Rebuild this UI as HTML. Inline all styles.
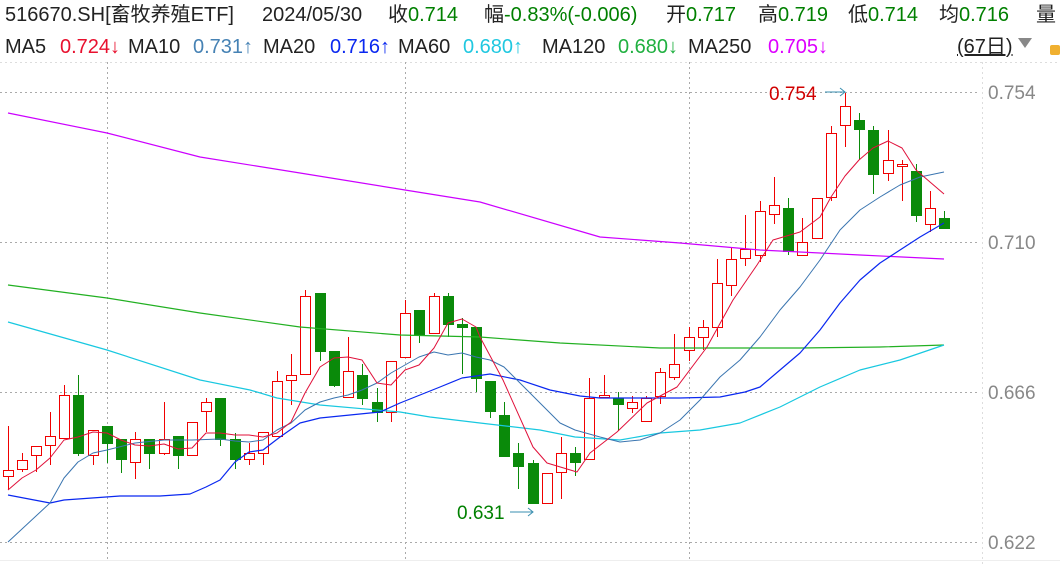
<!DOCTYPE html>
<html><head><meta charset="utf-8"><style>
body{margin:0;width:1060px;height:566px;background:#fff;overflow:hidden;position:relative;font-family:"Liberation Sans","Noto Sans CJK SC",sans-serif;}
.t{position:absolute;font-size:20px;white-space:nowrap;color:#222;line-height:22px}
.g{color:#008000}
svg{position:absolute;left:0;top:0}
</style></head><body>
<svg width="1060" height="566" id="s">
<g stroke="#aaa" stroke-dasharray="2,3" stroke-width="1">
<line x1="0" y1="62.5" x2="1060" y2="62.5" stroke="#ddd"/>
<line x1="0" y1="92.5" x2="980" y2="92.5"/>
<line x1="0" y1="242.5" x2="980" y2="242.5"/>
<line x1="0" y1="392.5" x2="980" y2="392.5"/>
<line x1="0" y1="542.5" x2="980" y2="542.5"/>
<line x1="107.5" y1="62" x2="107.5" y2="560"/>
<line x1="405.5" y1="62" x2="405.5" y2="560"/>
<line x1="689.5" y1="62" x2="689.5" y2="560"/>
<line x1="982.5" y1="62" x2="982.5" y2="566" stroke="#ddd"/>
</g>
<line x1="0" y1="560.5" x2="1060" y2="560.5" stroke="#eee"/>
<g id="c"></g>
<g fill="none" stroke-width="1.2" stroke-linejoin="round">
<polyline stroke="#cc00ff" points="8,113 107,133 200,157 300,173 405,190 480,202 600,237 680,243 760,250 860,255 944,259"/>
<polyline stroke="#22b022" points="8,285 107,298 200,313 300,327 400,335 480,337 560,343 660,348 740,348 800,348 880,347 944,345"/>
<polyline stroke="#18c8e0" points="8,322 107,350 200,380 250,390 277,398 320,405 400,412 430,417 480,423 540,430 575,437 620,440 660,433 700,430 740,423 780,407 820,387 860,370 900,360 944,345"/>
<polyline stroke="#0a28f0" points="8,495 50,503 64,500 92,498 120,496 160,496 190,494 206,487 220,480 235,462 249,452 263,450 280,437 300,423 320,418 350,415 380,412 400,403 420,395 440,387 462,378 490,374 520,380 550,390 580,396 600,398 640,398 680,398 720,397 745,392 760,387 780,370 800,353 820,330 840,303 860,280 880,263 900,250 920,237 944,223"/>
<polyline stroke="#3a75b0" stroke-width="1" points="8,542 50,503 64,478 78,462 93,453 107,450 135,443 164,440 192,440 220,439 235,441 249,442 263,440 277,430 291,423 305,410 320,402 334,398 348,395 362,390 377,383 391,373 405,365 419,357 434,352 448,355 462,353 476,357 490,360 504,367 520,383 540,403 560,423 575,430 600,437 620,442 640,440 660,433 680,420 700,400 720,377 740,360 760,337 780,310 800,287 820,260 840,230 860,210 880,197 900,185 920,177 944,172"/>
<polyline stroke="#e0103a" stroke-width="1" points="8,490 22,478 36,470 50,458 64,440 78,437 93,432 107,433 121,440 135,445 149,446 164,444 178,449 192,448 206,433 220,433 235,435 249,435 263,437 277,433 291,422 305,393 320,367 334,358 348,357 362,360 377,383 391,385 405,370 419,365 434,348 448,323 462,319 476,327 480,337 503,380 533,447 547,463 577,472 590,453 617,432 647,403 677,387 707,347 733,300 757,265 773,240 800,232 820,217 831,197 845,176 859,160 873,148 888,141 902,148 916,170 930,182 944,194"/>
</g>
<g stroke="#3a8fb0" fill="none" stroke-width="1">
<polyline points="825,92 845,92"/><polyline points="840,88 845,92 840,96"/>
<polyline points="510,512 533,512"/><polyline points="528,508 533,512 528,516"/>
</g>
<text x="769" y="100" font-size="19" fill="#d00000" font-family="Liberation Sans">0.754</text>
<text x="457" y="519" font-size="19" fill="#008000" font-family="Liberation Sans">0.631</text>
<g font-size="19" fill="#888" font-family="Liberation Sans">
<text x="988" y="99">0.754</text><text x="988" y="249">0.710</text><text x="988" y="399">0.666</text><text x="988" y="549">0.622</text>
</g>
<polygon points="1018,38 1032,38 1025,48" fill="#888"/>
<rect x="1050" y="45" width="10" height="10" rx="2" fill="#f0b030"/>
</svg>
<div class="t" style="left:5px;top:4px">516670.SH[畜牧养殖ETF]</div>
<div class="t" style="left:262px;top:4px">2024/05/30</div>
<div class="t" style="left:388px;top:4px">收<span class="g">0.714</span></div>
<div class="t" style="left:484px;top:4px">幅<span class="g">-0.83%(-0.006)</span></div>
<div class="t" style="left:666px;top:4px">开<span class="g">0.717</span></div>
<div class="t" style="left:758px;top:4px">高<span class="g">0.719</span></div>
<div class="t" style="left:848px;top:4px">低<span class="g">0.714</span></div>
<div class="t" style="left:939px;top:4px">均<span class="g">0.716</span></div>
<div class="t" style="left:1036px;top:4px">量</div>
<div class="t" style="left:5px;top:36px">MA5</div>
<div class="t" style="left:60px;top:36px;color:#e8102e">0.724↓</div>
<div class="t" style="left:128px;top:36px">MA10</div>
<div class="t" style="left:193px;top:36px;color:#4682b4">0.731↑</div>
<div class="t" style="left:263px;top:36px">MA20</div>
<div class="t" style="left:330px;top:36px;color:#0a28f0">0.716↑</div>
<div class="t" style="left:398px;top:36px">MA60</div>
<div class="t" style="left:463px;top:36px;color:#20c8e0">0.680↑</div>
<div class="t" style="left:542px;top:36px">MA120</div>
<div class="t" style="left:618px;top:36px;color:#20b040">0.680↓</div>
<div class="t" style="left:688px;top:36px">MA250</div>
<div class="t" style="left:768px;top:36px;color:#dd00ff">0.705↓</div>
<div class="t" style="left:957px;top:36px;text-decoration:underline">(67日)</div>
<script>
var d=[[8,470,476,426,490,1],[22,460,469,453,472,1],[36,446,455,446,472,1],[50,436,445,412,465,1],[64,395,438,385,438,1],[78,395,453,375,456,0],[93,430,455,430,465,1],[107,426,443,426,463,0],[121,439,459,439,473,0],[135,439,462,432,479,1],[149,439,453,439,469,0],[164,439,453,402,455,1],[178,436,455,436,469,0],[192,422,455,422,455,1],[206,402,411,398,432,1],[220,398,439,398,446,0],[235,439,459,433,469,0],[249,453,459,443,465,1],[263,432,453,432,465,1],[277,381,436,371,436,1],[291,375,380,354,405,1],[305,296,374,290,374,1],[320,293,351,293,361,0],[334,351,385,351,387,0],[348,371,397,337,397,1],[362,375,398,364,405,0],[377,402,412,388,422,0],[391,361,412,361,422,1],[405,313,357,300,357,1],[419,310,334,310,343,0],[434,296,333,293,333,1],[448,296,324,293,337,0],[462,324,327,318,374,0],[476,327,378,327,392,0],[490,381,411,381,418,0],[504,415,456,402,456,0],[518,453,466,443,489,0],[533,463,503,460,503,0],[547,473,503,473,503,1],[561,453,472,437,499,1],[575,453,462,447,476,0],[589,398,459,378,459,1],[604,395,397,375,397,1],[618,398,404,392,431,0],[632,402,408,396,413,1],[646,398,421,396,421,1],[660,372,396,368,404,1],[674,364,377,334,380,1],[689,337,350,327,361,1],[703,327,337,320,350,1],[717,283,327,259,337,1],[731,259,285,247,296,1],[745,249,258,215,266,1],[760,211,255,201,262,1],[774,205,214,177,224,1],[788,208,251,198,255,0],[802,242,255,218,255,1],[817,198,238,198,238,1],[831,133,197,126,201,1],[845,106,125,93,147,1],[859,120,129,113,160,0],[873,130,174,126,194,0],[888,160,173,130,181,1],[902,164,166,160,201,1],[916,171,215,164,222,0],[930,208,224,191,232,1],[944,218,228,211,228,0]];
var h='';d.forEach(function(c){var x=c[0]+.5,col=c[5]?'#f00000':'#0a8a0a';
h+='<line x1="'+x+'" y1="'+c[3]+'" x2="'+x+'" y2="'+c[1]+'" stroke="'+col+'"/><line x1="'+x+'" y1="'+c[2]+'" x2="'+x+'" y2="'+c[4]+'" stroke="'+col+'"/>';
var bh=Math.max(1,c[2]-c[1]);
if(c[5])h+='<rect x="'+(c[0]-4.5)+'" y="'+(c[1]+.5)+'" width="10" height="'+bh+'" fill="#fff" stroke="#f00000"/>';
else h+='<rect x="'+(c[0]-5)+'" y="'+c[1]+'" width="11" height="'+(bh+1)+'" fill="#0a8a0a"/>';});
document.getElementById('c').innerHTML=h;
</script>
</body></html>
